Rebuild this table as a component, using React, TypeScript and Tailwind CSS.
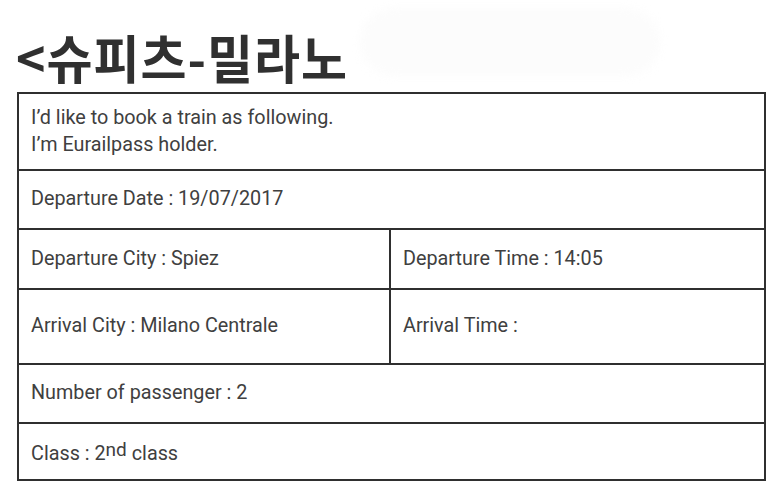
const FONT = "font-['Roboto','Noto_Sans_CJK_KR',sans-serif]";

function Cell({ children, className = "" }: { children: React.ReactNode; className?: string }) {
  return (
    <div className={`flex items-center pl-3 text-[19.8px] leading-[27px] text-[#404040] ${className}`}>
      <div className="-mt-[2px]">{children}</div>
    </div>
  );
}

export default function App() {
  return (
    <div className={`w-[773px] h-[504px] bg-white ${FONT}`}>
      <div className="flex items-center h-[92px] pl-[16px]">
        <h1 className="font-['Noto_Sans_CJK_KR',sans-serif] font-bold text-[50px] leading-none text-[#303030] tracking-[1px] pt-[20px] scale-y-[1.04]">
          &lt;슈피츠-밀라노
        </h1>
        <div className="ml-[12px] mt-[-8px] h-[68px] w-[300px] rounded-[40px] bg-[#fcfcfc] blur-[4px]" />
      </div>
      <div className="ml-[17px] w-[749px] border-2 border-[#2f2f2f]">
        <Cell className="h-[75px]">
          I’d like to book a train as following.
          <br />
          I’m Eurailpass holder.
        </Cell>
        <Cell className="h-[59px] border-t-2 border-[#2f2f2f]">Departure Date : 19/07/2017</Cell>
        <div className="grid grid-cols-[372px_1fr] border-t-2 border-[#2f2f2f]">
          <Cell className="h-[58px] border-r-2 border-[#2f2f2f]">Departure City : Spiez</Cell>
          <Cell className="h-[58px]">Departure Time : 14:05</Cell>
        </div>
        <div className="grid grid-cols-[372px_1fr] border-t-2 border-[#2f2f2f]">
          <Cell className="h-[73px] border-r-2 border-[#2f2f2f]">Arrival City : Milano Centrale</Cell>
          <Cell className="h-[73px]">Arrival Time :</Cell>
        </div>
        <Cell className="h-[59px] border-t-2 border-[#2f2f2f]">Number of passenger : 2</Cell>
        <Cell className="h-[57px] border-t-2 border-[#2f2f2f]">
          <span className="relative top-[3px]">
            Class : 2<sup className="text-[19px] relative top-[-4px]">nd</sup> class
          </span>
        </Cell>
      </div>
    </div>
  );
}
